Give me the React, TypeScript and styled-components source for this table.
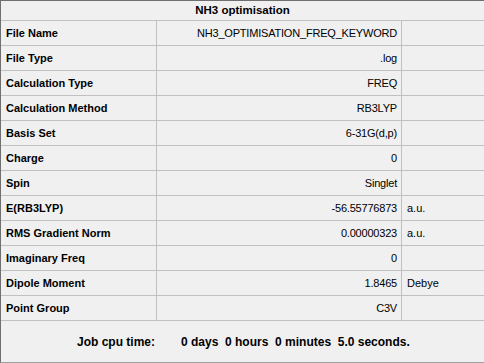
import styled, { createGlobalStyle } from 'styled-components';

const GlobalStyle = createGlobalStyle`
  html, body {
    margin: 0;
    padding: 0;
    background: #f0f0f0;
  }
  body {
    font-family: "Liberation Sans", Arial, sans-serif;
    font-size: 11px;
    color: #000;
  }
`;

const rows: { label: string; value: string; unit?: string }[] = [
  { label: 'File Name', value: 'NH3_OPTIMISATION_FREQ_KEYWORD' },
  { label: 'File Type', value: '.log' },
  { label: 'Calculation Type', value: 'FREQ' },
  { label: 'Calculation Method', value: 'RB3LYP' },
  { label: 'Basis Set', value: '6-31G(d,p)' },
  { label: 'Charge', value: '0' },
  { label: 'Spin', value: 'Singlet' },
  { label: 'E(RB3LYP)', value: '-56.55776873', unit: 'a.u.' },
  { label: 'RMS Gradient Norm', value: '0.00000323', unit: 'a.u.' },
  { label: 'Imaginary Freq', value: '0' },
  { label: 'Dipole Moment', value: '1.8465', unit: 'Debye' },
  { label: 'Point Group', value: 'C3V' },
];

function App() {
  return (
    <>
      <GlobalStyle />
      <Frame>
        <Title>NH3 optimisation</Title>
        <Grid>
          {rows.map((r) => (
            <Row key={r.label}>
              <Label>{r.label}</Label>
              <Value>{r.value}</Value>
              <Unit>{r.unit ?? ''}</Unit>
            </Row>
          ))}
        </Grid>
        <Footer>
          <FooterLabel>Job cpu time:</FooterLabel>
          <FooterValue>{'0 days  0 hours  0 minutes  5.0 seconds.'}</FooterValue>
        </Footer>
      </Frame>
    </>
  );
}

export default App;

const Frame = styled.div`
  width: 483px;
  height: 361px;
  border-top: 1px solid #6f6f6f;
  border-left: 1px solid #6f6f6f;
  border-bottom: 1px solid #a0a0a0;
  display: flex;
  flex-direction: column;
  background: #f0f0f0;
`;

const Title = styled.div`
  height: 19px;
  line-height: 19px;
  text-align: center;
  font-weight: bold;
  font-size: 11.5px;
  border-bottom: 1px solid #c0c0c0;
`;

const Grid = styled.div`
  display: flex;
  flex-direction: column;
`;

const Row = styled.div`
  display: grid;
  grid-template-columns: 155px 244px 1fr;
  column-gap: 1px;
  height: 24px;
  background: #c0c0c0;
  border-bottom: 1px solid #c0c0c0;

  > div {
    background: #f0f0f0;
    line-height: 24px;
    white-space: nowrap;
  }
`;

const Label = styled.div`
  padding-left: 5px;
  font-weight: bold;
`;

const Value = styled.div`
  text-align: right;
  padding-right: 4px;
  letter-spacing: -0.2px;
`;

const Unit = styled.div`
  padding-left: 5px;
`;

const Footer = styled.div`
  flex: 1;
  display: flex;
  align-items: center;
  padding-left: 76px;
  font-weight: bold;
  font-size: 12px;
`;

const FooterLabel = styled.div`
  width: 104px;
`;

const FooterValue = styled.div`
  white-space: pre;
`;
